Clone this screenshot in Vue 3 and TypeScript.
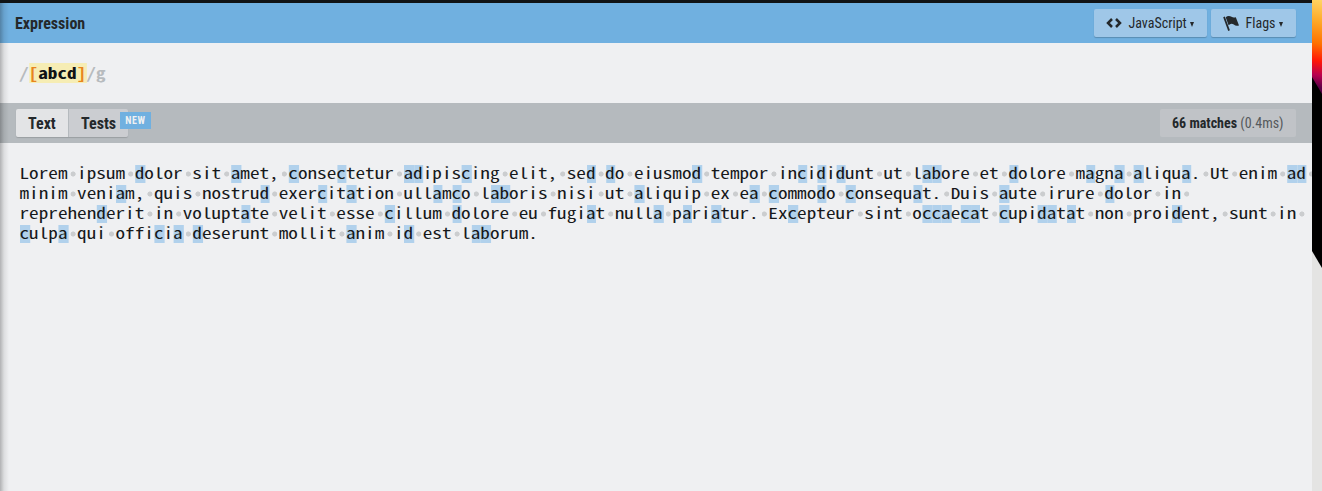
<script setup lang="ts">
interface Cell {
  char: string
  kind: 'match' | 'space' | 'plain'
}

const lines: string[] = [
  'Lorem ipsum dolor sit amet, consectetur adipiscing elit, sed do eiusmod tempor incididunt ut labore et dolore magna aliqua. Ut enim ad ',
  'minim veniam, quis nostrud exercitation ullamco laboris nisi ut aliquip ex ea commodo consequat. Duis aute irure dolor in ',
  'reprehenderit in voluptate velit esse cillum dolore eu fugiat nulla pariatur. Excepteur sint occaecat cupidatat non proident, sunt in ',
  'culpa qui officia deserunt mollit anim id est laborum.',
]

const rows: Cell[][] = lines.map((line) =>
  [...line].map((char): Cell => ({
    char,
    kind: /[abcd]/.test(char) ? 'match' : char === ' ' ? 'space' : 'plain',
  })),
)
</script>

<template>
  <div class="screen">
    <main class="app">
      <header class="bar expression-bar">
        <h1><span class="cond">Expression</span></h1>
        <div class="actions">
          <button class="btn js">
            <svg class="code-icon" viewBox="0 0 16 10" width="16" height="10">
              <path d="M6 1 2 5l4 4M10 1l4 4-4 4" fill="none" stroke="#24282b" stroke-width="2.5" />
            </svg>
            <span class="cond">JavaScript</span><i class="caret"></i>
          </button>
          <button class="btn flags">
            <svg class="flag-icon" viewBox="0 0 17 17" width="17" height="17">
              <path d="M.2 2.300 1.800 1.400 6.900 15.300 5.200 15.900Z" fill="#24282b" />
              <path d="M2.700 2.300C4.500.6 6.700.6 8.500 1.800c1.500 1 2.900.9 4.300.4L16 10.400c-2 .9-3.800.4-5.200-.8C9 8.100 7.300 8.400 5.600 10.200Z" fill="#24282b" />
            </svg>
            <span class="cond">Flags</span><i class="caret"></i>
          </button>
        </div>
      </header>
      <section class="pattern">
        <div class="source"><span class="delim">/</span><span class="group"><b class="bracket">[</b>abcd<b class="bracket">]</b></span><span class="delim">/g</span></div>
      </section>
      <nav class="bar text-bar">
        <div class="tabs">
          <button class="tab selected"><span class="cond">Text</span></button>
          <button class="tab tests"><span class="cond">Tests</span><em class="badge">NEW</em></button>
        </div>
        <div class="result"><span class="cond"><b>66 matches</b> (0.4ms)</span></div>
      </nav>
      <section class="text">
        <div v-for="(row, r) in rows" :key="r" class="line">
          <span v-for="(cell, c) in row" :key="c" class="cell" :class="cell.kind">{{ cell.char }}</span>
        </div>
      </section>
    </main>
    <svg class="wallpaper" viewBox="0 0 10 491" width="10" height="491">
      <defs>
        <linearGradient id="glow" gradientUnits="userSpaceOnUse" x1="8" y1="0" x2="-10" y2="84">
          <stop offset="0" stop-color="#ffd463" />
          <stop offset=".25" stop-color="#ffa827" />
          <stop offset=".5" stop-color="#ff7200" />
          <stop offset=".7" stop-color="#ff1707" />
          <stop offset=".86" stop-color="#b80050" />
          <stop offset="1" stop-color="#590047" />
        </linearGradient>
      </defs>
      <rect width="10" height="491" fill="#e4e4e3" />
      <path d="M0 0h10v268L0 251Z" fill="#000" />
      <path d="M0 0h10v94L0 77Z" fill="url(#glow)" />
    </svg>
  </div>
</template>

<style>
body {
  margin: 0;
  overflow: hidden;
}
</style>

<style scoped>
.screen {
  display: flex;
  width: 1322px;
  height: 491px;
  overflow: hidden;
}
.app {
  position: relative;
  box-sizing: border-box;
  width: 1312px;
  height: 491px;
  border-top: 3px solid #101315;
  background: #eff0f2;
  color: #24282b;
  overflow: hidden;
  font-family: "Roboto Condensed", Roboto, sans-serif;
}
.app::after {
  content: "";
  position: absolute;
  inset: 0 auto 0 0;
  width: 9px;
  background: linear-gradient(90deg, rgba(0, 0, 0, .26), rgba(0, 0, 0, .08) 45%, transparent);
}
.wallpaper {
  display: block;
  flex: none;
}
.bar {
  display: flex;
  box-sizing: border-box;
  height: 40px;
  padding: 0 16px 0 15px;
  justify-content: space-between;
  align-items: center;
}
.expression-bar {
  background: #70b0e0;
}
h1 {
  margin: 2px 0 0;
  font-size: 16px;
  line-height: 20px;
}
.cond {
  white-space: nowrap;
}
.actions {
  display: flex;
  gap: 4px;
}
.btn {
  display: flex;
  align-items: center;
  box-sizing: border-box;
  height: 28px;
  padding: 0 12px;
  border: 0;
  border-radius: 2px;
  background: #9fc7e8;
  box-shadow: 0 1px 1px rgba(0, 0, 0, .2);
  color: #24282b;
  font: 400 14px/28px "Roboto Condensed", Roboto, sans-serif;
}
.js {
  width: 113px;
}
.flags {
  width: 85px;
}
.code-icon {
  flex: none;
  margin-right: 6.5px;
}
.flag-icon {
  flex: none;
  margin-right: 5.5px;
}
.caret {
  margin: 2px 0 0 3.5px;
  border: 2.5px solid transparent;
  border-top: 5px solid #24282b;
  border-bottom: 0;
}
.pattern {
  box-sizing: border-box;
  height: 60px;
  padding: 20px 19px;
  color: #101315;
  font: 700 15px/19px "Noto Sans Mono CJK SC", "DejaVu Sans Mono", monospace;
}
.source {
  display: flex;
  width: max-content;
  height: 20px;
  transform: scaleX(1.28);
  transform-origin: 0 0;
}
.delim {
  color: #b7bbbe;
}
.group {
  background: #f6edb4;
}
.bracket {
  color: #e8841c;
}
.text-bar {
  background: #b5babe;
}
.tabs {
  display: flex;
  gap: 1px;
  margin-left: 1px;
  border-radius: 2px;
  box-shadow: 0 1px 1px rgba(0, 0, 0, .15);
}
.tab {
  position: relative;
  box-sizing: border-box;
  width: 52px;
  height: 28px;
  padding: 1px 0 0 12px;
  border: 0;
  border-radius: 2px 0 0 2px;
  background: #e3e4e6;
  color: #24282b;
  text-align: left;
  font: 700 16px/27px "Roboto Condensed", Roboto, sans-serif;
}
.tests {
  width: 59px;
  border-radius: 0 2px 2px 0;
  background: #cbcdd1;
}
.badge {
  position: absolute;
  top: 3px;
  left: 51px;
  width: 31px;
  height: 17px;
  background: #70b0e0;
  color: #eff0f2;
  text-align: center;
  font: 700 10px/17px "Roboto Condensed", Roboto, sans-serif;
  letter-spacing: .6px;
}
.result {
  box-sizing: border-box;
  width: 136px;
  height: 28px;
  padding-left: 12px;
  border-radius: 2px;
  background: #c0c3c7;
  color: #55595c;
  font-size: 14px;
  line-height: 28px;
}
.result b {
  color: #24282b;
}
.text {
  padding: 20px;
  color: #17191b;
  font: 400 15px/20px "Noto Sans Mono CJK SC", "DejaVu Sans Mono", monospace;
}
.line {
  display: flex;
  width: max-content;
  height: 20px;
  transform: scaleX(1.28);
  transform-origin: 0 0;
}
.cell {
  display: block;
  flex: none;
  width: 7.5px;
  height: 18px;
  margin-top: 2px;
  line-height: 15px;
  text-indent: -.4px;
}
.match {
  background: #b1d1ec;
}
.space {
  background: radial-gradient(ellipse 2.25px 2.9px at 50% 9px, #cbcdcf 75%, transparent 100%);
}
</style>
